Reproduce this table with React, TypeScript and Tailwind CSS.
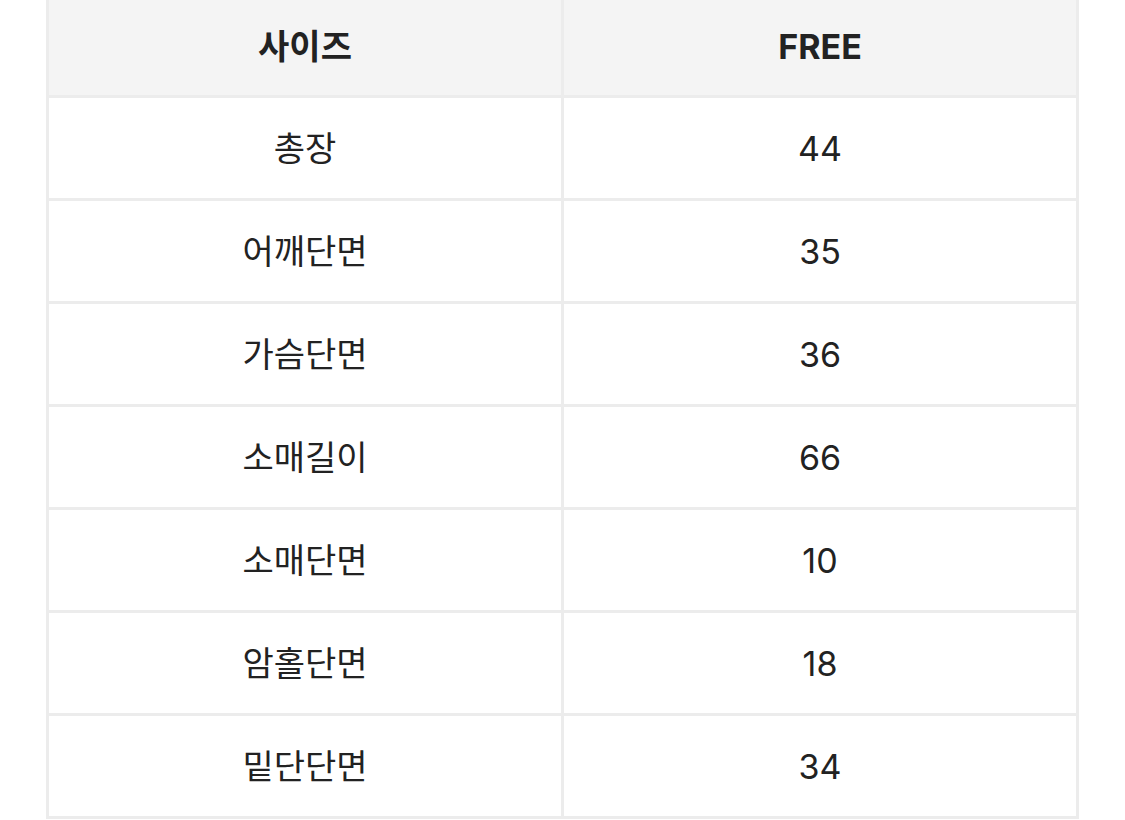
const rows: [string, string][] = [
  ['총장', '44'],
  ['어깨단면', '35'],
  ['가슴단면', '36'],
  ['소매길이', '66'],
  ['소매단면', '10'],
  ['암홀단면', '18'],
  ['밑단단면', '34'],
];

export default function App() {
  return (
    <div
      className="w-[1125px] h-[820px] overflow-hidden bg-white"
      style={{ fontFamily: 'Inter, "Noto Sans CJK KR", sans-serif' }}
    >
      <div className="pl-[46px] pr-[46px] -mt-[5px]">
        <table className="w-[1033px] border-collapse table-fixed text-[#222] text-[34px]">
          <thead>
            <tr className="h-[100px] bg-[#f4f4f4]">
              <th className="border-[3px] border-[#ececec] font-bold">사이즈</th>
              <th className="border-[3px] border-[#ececec] font-bold">FREE</th>
            </tr>
          </thead>
          <tbody>
            {rows.map(([label, value]) => (
              <tr key={label} className="h-[103px]">
                <td className="border-[3px] border-[#ececec] text-center">{label}</td>
                <td className="border-[3px] border-[#ececec] text-center">{value}</td>
              </tr>
            ))}
          </tbody>
        </table>
      </div>
    </div>
  );
}
